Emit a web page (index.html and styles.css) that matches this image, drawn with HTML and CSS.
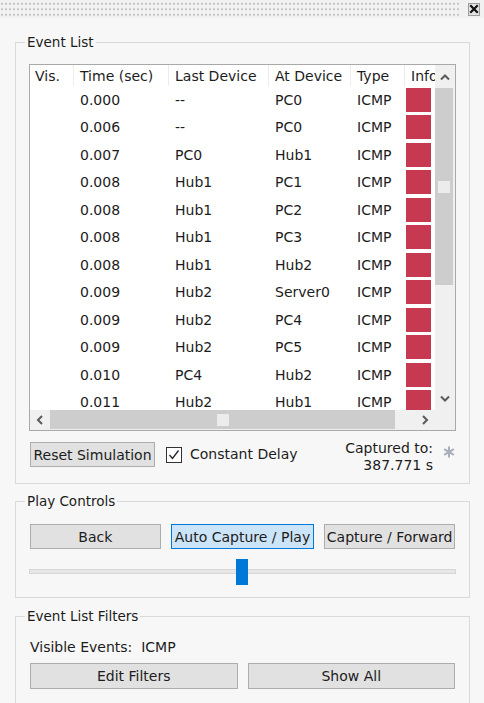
FILE: index.html
```html
<!DOCTYPE html>
<html>
<head>
<meta charset="utf-8">
<link rel="stylesheet" href="styles.css">
</head>
<body>
<div class="titlebar">
  <div class="grip"></div>
  <div class="close"><svg width="10" height="10" viewBox="0 0 10 10"><path d="M2 2 L8 8 M8 2 L2 8" stroke="#111" stroke-width="2.2" stroke-linecap="square"/></svg></div>
</div>
<div class="panel">
  <fieldset class="group group-events">
    <legend>Event List</legend>
    <div class="listbox">
      <div class="viewport">
        <div class="row head">
          <span class="c">Vis.</span><span class="c">Time (sec)</span><span class="c">Last Device</span><span class="c">At Device</span><span class="c">Type</span><span class="c">Info</span>
        </div>
        <div class="row"><span class="c"></span><span class="c">0.000</span><span class="c">--</span><span class="c">PC0</span><span class="c">ICMP</span><span class="c info"><i></i></span></div>
        <div class="row"><span class="c"></span><span class="c">0.006</span><span class="c">--</span><span class="c">PC0</span><span class="c">ICMP</span><span class="c info"><i></i></span></div>
        <div class="row"><span class="c"></span><span class="c">0.007</span><span class="c">PC0</span><span class="c">Hub1</span><span class="c">ICMP</span><span class="c info"><i></i></span></div>
        <div class="row"><span class="c"></span><span class="c">0.008</span><span class="c">Hub1</span><span class="c">PC1</span><span class="c">ICMP</span><span class="c info"><i></i></span></div>
        <div class="row"><span class="c"></span><span class="c">0.008</span><span class="c">Hub1</span><span class="c">PC2</span><span class="c">ICMP</span><span class="c info"><i></i></span></div>
        <div class="row"><span class="c"></span><span class="c">0.008</span><span class="c">Hub1</span><span class="c">PC3</span><span class="c">ICMP</span><span class="c info"><i></i></span></div>
        <div class="row"><span class="c"></span><span class="c">0.008</span><span class="c">Hub1</span><span class="c">Hub2</span><span class="c">ICMP</span><span class="c info"><i></i></span></div>
        <div class="row"><span class="c"></span><span class="c">0.009</span><span class="c">Hub2</span><span class="c">Server0</span><span class="c">ICMP</span><span class="c info"><i></i></span></div>
        <div class="row"><span class="c"></span><span class="c">0.009</span><span class="c">Hub2</span><span class="c">PC4</span><span class="c">ICMP</span><span class="c info"><i></i></span></div>
        <div class="row"><span class="c"></span><span class="c">0.009</span><span class="c">Hub2</span><span class="c">PC5</span><span class="c">ICMP</span><span class="c info"><i></i></span></div>
        <div class="row"><span class="c"></span><span class="c">0.010</span><span class="c">PC4</span><span class="c">Hub2</span><span class="c">ICMP</span><span class="c info"><i></i></span></div>
        <div class="row"><span class="c"></span><span class="c">0.011</span><span class="c">Hub2</span><span class="c">Hub1</span><span class="c">ICMP</span><span class="c info"><i></i></span></div>
      </div>
      <div class="vscroll">
        <div class="sbtn"><svg width="12" height="8" viewBox="0 0 12 8"><path d="M2 6.5 L6 2.5 L10 6.5" fill="none" stroke="#5a5a5a" stroke-width="2"/></svg></div>
        <div class="vthumb"><b class="gripbox"></b></div>
        <div class="vtrack"></div>
        <div class="sbtn"><svg width="12" height="8" viewBox="0 0 12 8"><path d="M2 1.5 L6 5.5 L10 1.5" fill="none" stroke="#5a5a5a" stroke-width="2"/></svg></div>
      </div>
      <div class="hscroll">
        <div class="sbtn"><svg width="8" height="12" viewBox="0 0 8 12"><path d="M6 2 L2 6 L6 10" fill="none" stroke="#5a5a5a" stroke-width="2"/></svg></div>
        <div class="hthumb"><b class="gripbox"></b></div>
        <div class="htrack"></div>
        <div class="sbtn"><svg width="8" height="12" viewBox="0 0 8 12"><path d="M2 2 L6 6 L2 10" fill="none" stroke="#5a5a5a" stroke-width="2"/></svg></div>
      </div>
      <div class="corner"></div>
    </div>
    <div class="sim-row">
      <button class="btn reset">Reset Simulation</button>
      <span class="check"><svg width="14" height="14" viewBox="0 0 14 14"><path d="M2.5 7 L5.5 10.5 L11.5 2.5" fill="none" stroke="#222" stroke-width="1.3"/></svg></span>
      <span class="check-label">Constant Delay</span>
      <span class="captured">Captured to:<br>387.771 s</span>
      <span class="star"><svg width="12" height="12" viewBox="0 0 12 12"><path d="M6 0.5 V11.5 M1.2 3.2 L10.8 8.8 M10.8 3.2 L1.2 8.8" stroke="#a7aeb6" stroke-width="2"/></svg></span>
    </div>
  </fieldset>

  <fieldset class="group group-play">
    <legend>Play Controls</legend>
    <div class="btn-row">
      <button class="btn back">Back</button>
      <button class="btn auto">Auto Capture / Play</button>
      <button class="btn fwd">Capture / Forward</button>
    </div>
    <div class="slider">
      <div class="track"></div>
      <div class="knob"></div>
    </div>
  </fieldset>

  <fieldset class="group group-filters">
    <legend>Event List Filters</legend>
    <div class="visible">Visible Events:&nbsp; ICMP</div>
    <div class="btn-row two">
      <button class="btn">Edit Filters</button>
      <button class="btn">Show All</button>
    </div>
  </fieldset>
</div>
</body>
</html>
```

FILE: styles.css
```css
* { box-sizing: border-box; }
html, body { margin: 0; padding: 0; }
body {
  width: 484px;
  height: 703px;
  overflow: hidden;
  background: #f7f7f7;
  font-family: "DejaVu Sans", Verdana, sans-serif;
  font-size: 14px;
  color: #1c1c1c;
}

.titlebar {
  height: 18px;
  display: flex;
  align-items: center;
  background: #f1f1f1;
  padding-right: 4px;
}
.grip {
  flex: 1;
  height: 16px;
  margin-right: 7px;
  background-image: radial-gradient(circle, #c3c3c3 0.9px, transparent 1.3px);
  background-size: 4px 5.5px;
  background-position: 0 0;
}
.close {
  width: 12px;
  height: 13px;
  border: 1px solid #9c9c9c;
  background: #e4e4e4;
  display: flex;
  align-items: center;
  justify-content: center;
}

.panel {
  padding: 16px 14px 0 15px;
}

.group {
  margin: 0;
  border: 1px solid #dadada;
  padding: 0 13px 16px 13px;
  min-width: 0;
}
.group legend {
  margin-left: -4px;
  padding: 0 2px;
  line-height: 16px;
  font-size: 13.5px;
}
.group-play { margin-top: 9px; padding-bottom: 11px; }
.group-filters { margin-top: 10px; height: 200px; }

/* list box */
.listbox {
  margin-top: 14px;
  height: 367px;
  border: 1px solid #a9a9a9;
  background: #fff;
  display: grid;
  grid-template-columns: 1fr 20px;
  grid-template-rows: 1fr 20px;
}
.viewport {
  overflow: hidden;
  background: #fff;
}
.row {
  display: grid;
  grid-template-columns: 43px 95px 100px 82px 54px 40px;
  height: 27.5px;
  align-items: center;
  white-space: nowrap;
}
.row.head {
  height: 21px;
  align-items: stretch;
}
.row.head .c {
  display: flex;
  align-items: center;
  padding-left: 6px;
}
.row.head .c + .c { border-left: 1px solid #ececec; padding-left: 6px; }
.row .c { padding-left: 7px; overflow: hidden; }
.row .c:first-child { padding-left: 5px; }
.row .info { padding-left: 2px; height: 100%; display: flex; align-items: center; }
.row .info i {
  display: block;
  width: 25px;
  height: 24px;
  background: #c73950;
}

.vscroll {
  background: #f0f0f0;
  display: flex;
  flex-direction: column;
}
.vscroll .sbtn { height: 23px; }
.vthumb {
  height: 197px;
  background: #cdcdcd;
  display: flex;
  align-items: center;
  justify-content: center;
  margin-right: 2px;
}
.vtrack { flex: 1; }
.hscroll {
  background: #f0f0f0;
  display: flex;
}
.hscroll .sbtn { width: 20px; }
.hthumb {
  width: 345px;
  background: #cdcdcd;
  display: flex;
  align-items: center;
  justify-content: center;
  margin-bottom: 1px;
}
.htrack { flex: 1; }
.sbtn {
  display: flex;
  align-items: center;
  justify-content: center;
}
.gripbox {
  display: block;
  width: 12px;
  height: 12px;
  background: #ececec;
}
.corner { background: #f0f0f0; }

/* bottom row of event list */
.sim-row {
  margin-top: 11px;
  height: 25px;
  display: flex;
  align-items: flex-start;
  padding-left: 1px;
}
.btn {
  font-family: inherit;
  font-size: 14px;
  color: #1c1c1c;
  background: #e1e1e1;
  border: 1px solid #adadad;
  border-radius: 0;
  padding: 0;
  height: 25px;
  margin: 0;
}
.reset { width: 125px; flex: none; }
.check {
  margin-left: 11px;
  margin-top: 5px;
  width: 16px;
  height: 16px;
  border: 1px solid #333;
  background: #fff;
  display: flex;
  align-items: center;
  justify-content: center;
}
.check-label { margin-left: 8px; margin-top: 4px; line-height: 17px; }
.captured {
  margin-left: auto;
  text-align: right;
  line-height: 17px;
  margin-top: -2px;
}
.star {
  margin-left: 10px;
  margin-right: 1px;
  margin-top: 4px;
  display: flex;
}

/* play controls */
.btn-row {
  margin-top: 15px;
  display: flex;
  gap: 10px;
  padding: 0 1px;
}
.back { width: 131px; }
.auto { width: 144px; background: #cce4f7; border-color: #0078d7; }
.fwd { width: 131px; }
.slider {
  margin-top: 9px;
  height: 28px;
  position: relative;
}
.track {
  position: absolute;
  left: 0;
  right: 0;
  top: 11px;
  height: 5px;
  background: #e7e7e7;
  border: 1px solid #d6d6d6;
}
.knob {
  position: absolute;
  left: 207px;
  top: 1px;
  width: 12px;
  height: 26px;
  background: #0078d7;
}

/* filters */
.visible {
  margin-top: 15px;
  line-height: 16px;
  padding-left: 1px;
}
.btn-row.two { margin-top: 8px; }
.btn-row.two .btn { flex: 1; height: 26px; }
```
